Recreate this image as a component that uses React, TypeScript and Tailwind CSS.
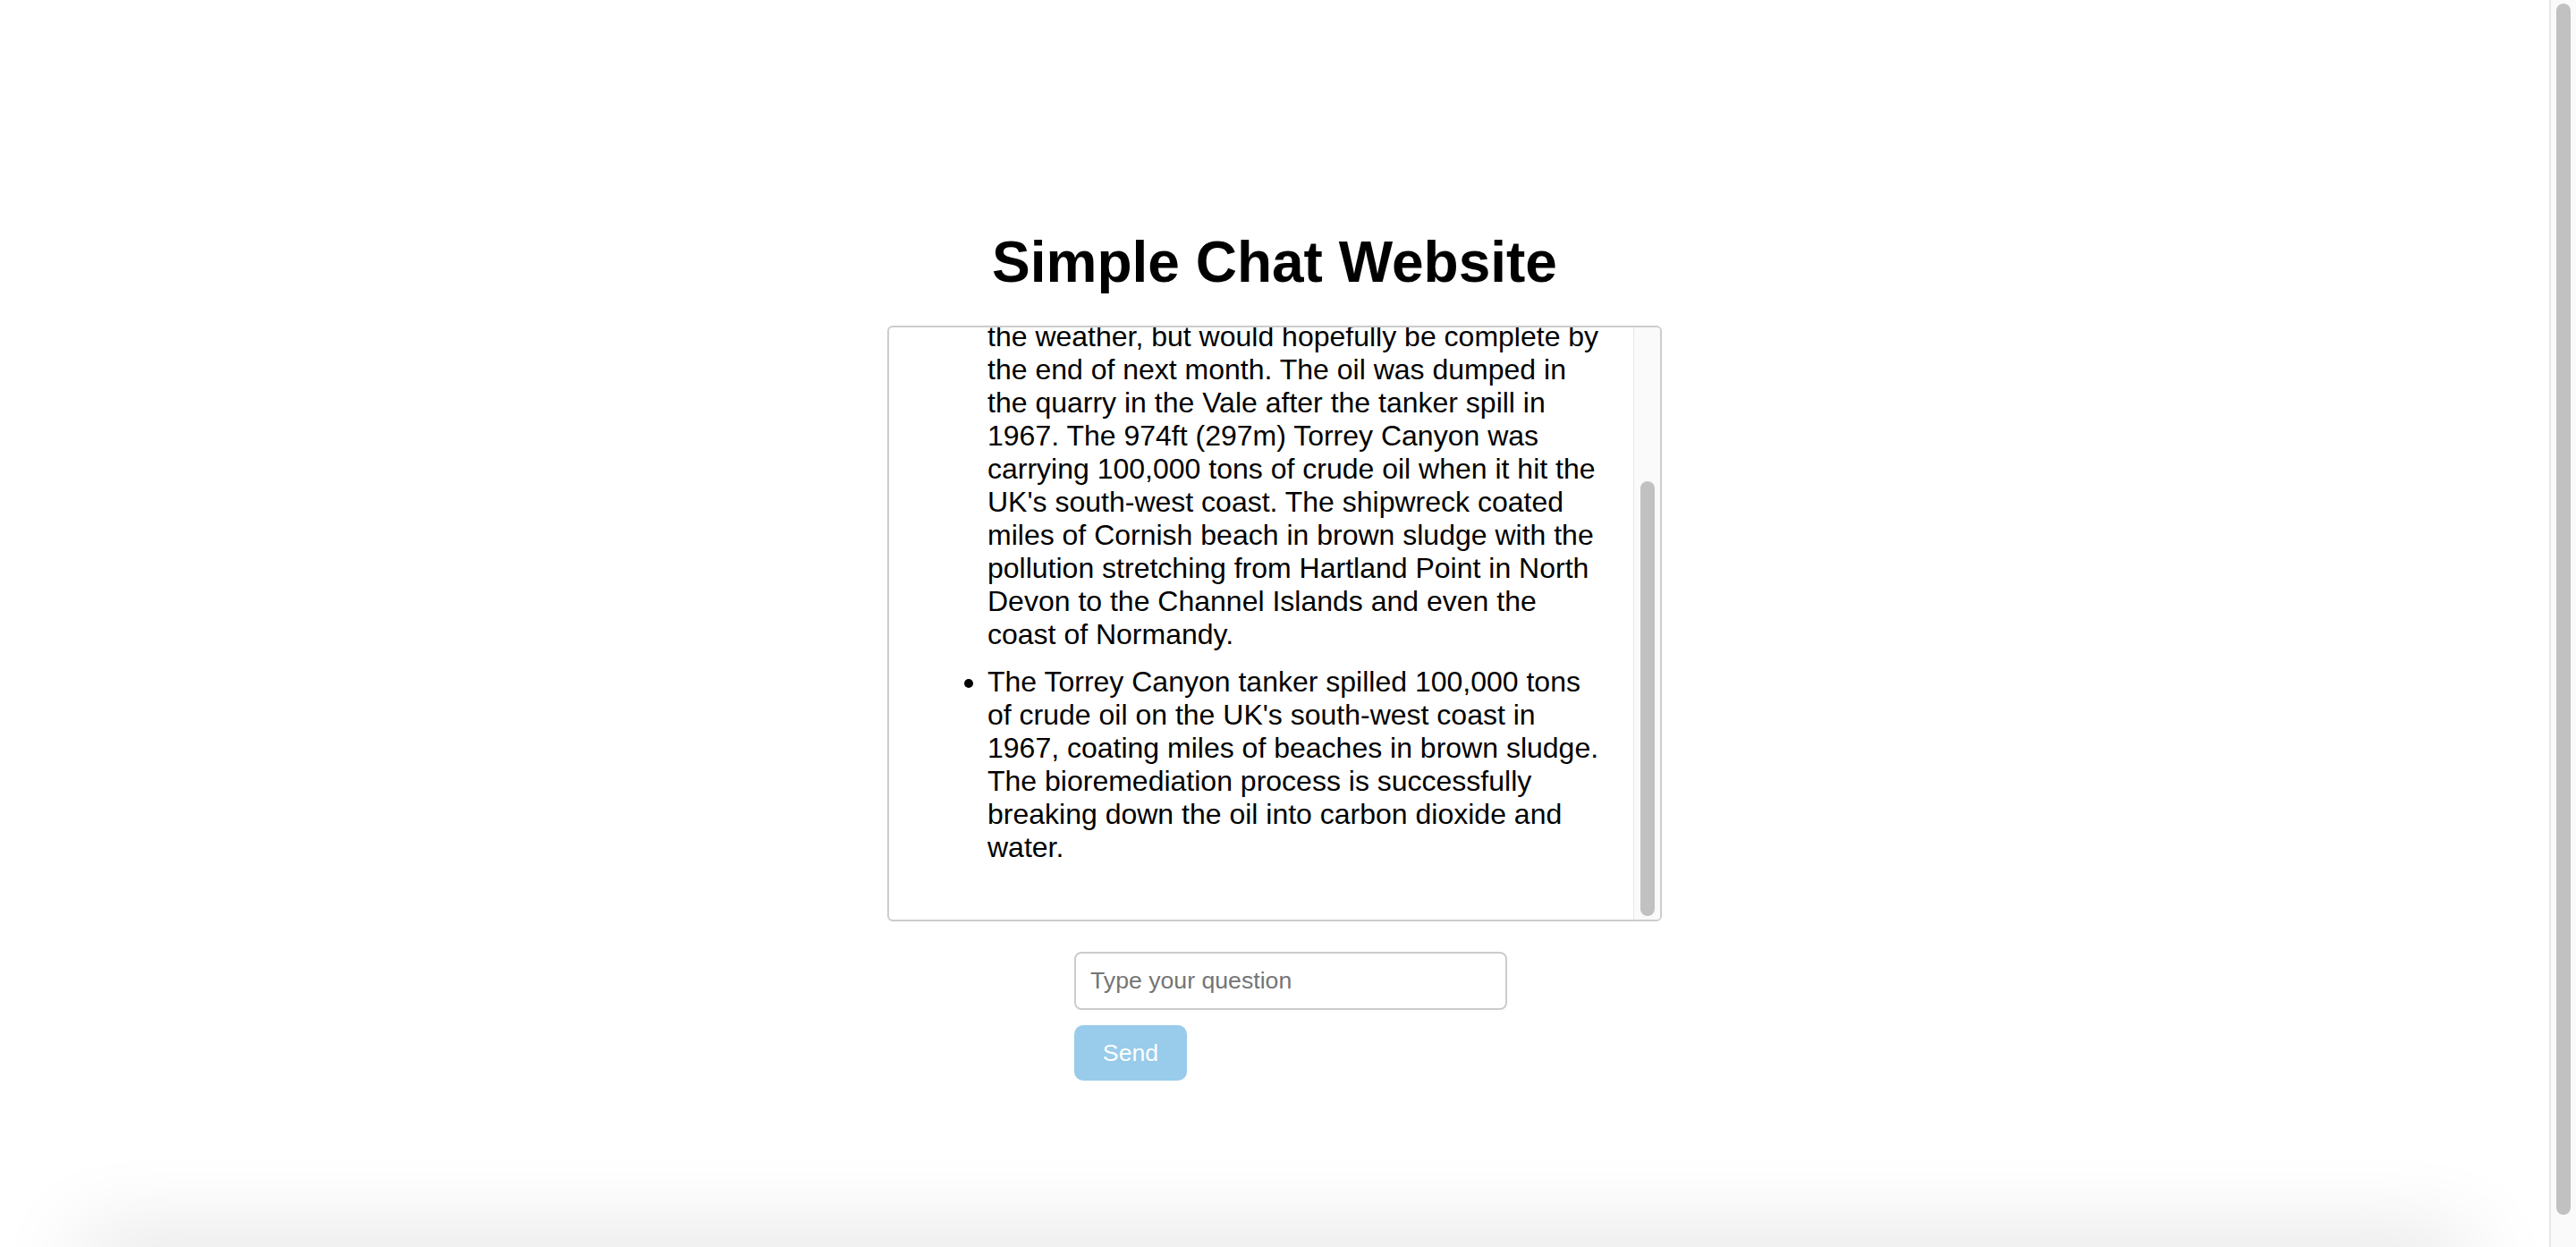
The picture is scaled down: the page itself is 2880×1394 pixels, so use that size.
const messages = [
  {
    id: 1,
    lead: "Jersey's environment department said the final stage of the clean-up had been slowed by",
    text: "the weather, but would hopefully be complete by the end of next month. The oil was dumped in the quarry in the Vale after the tanker spill in 1967. The 974ft (297m) Torrey Canyon was carrying 100,000 tons of crude oil when it hit the UK's south-west coast. The shipwreck coated miles of Cornish beach in brown sludge with the pollution stretching from Hartland Point in North Devon to the Channel Islands and even the coast of Normandy.",
  },
  {
    id: 2,
    lead: '',
    text: "The Torrey Canyon tanker spilled 100,000 tons of crude oil on the UK's south-west coast in 1967, coating miles of beaches in brown sludge. The bioremediation process is successfully breaking down the oil into carbon dioxide and water.",
  },
];

export default function App() {
  return (
    <div className="flex h-[1394px] w-full overflow-hidden bg-white font-['Liberation_Sans',Arial,sans-serif] text-black">
      <main className="relative flex flex-1 flex-col items-center overflow-hidden pt-[256px]">
        <h1 className="text-[64px] font-bold leading-[74px]">Simple Chat Website</h1>

        {/* chat log, scrolled to the bottom */}
        <div className="mt-[34px] flex h-[666px] w-[866px] overflow-hidden rounded-[6px] border-2 border-[#cccccc]">
          <div className="flex flex-1 flex-col justify-end overflow-hidden p-[30px]">
            <ul className="mb-[32px] list-disc pl-[80px] text-[32px] leading-[37px]">
              {messages.map((m, i) => (
                <li key={m.id} className={i < messages.length - 1 ? 'mb-[16px]' : ''}>
                  {m.lead && (
                    <>
                      {m.lead}
                      <br />
                    </>
                  )}
                  {m.text}
                </li>
              ))}
            </ul>
          </div>
          <div className="flex w-[30px] shrink-0 flex-col items-center justify-end border-l border-[#e8e8e8] bg-[#fafafa] pb-[4px]">
            <div className="h-[486px] w-[16px] rounded-full bg-[#c1c1c1]" />
          </div>
        </div>

        <div className="mt-[34px] flex w-[866px] flex-col items-start gap-[17px] pl-[209px]">
          <input
            type="text"
            placeholder="Type your question"
            className="h-[65px] w-[484px] rounded-[8px] border-2 border-[#cccccc] bg-white px-[16px] text-[26.67px] text-black outline-none placeholder:text-[#757575]"
          />
          <button className="h-[62px] w-[126px] rounded-[10px] bg-[#99cbea] text-[26.67px] text-white">
            Send
          </button>
        </div>

        <div className="pointer-events-none absolute bottom-[-40px] left-[90px] right-[90px] h-[40px] shadow-[0_0_100px_rgba(0,0,0,0.2)]" />
      </main>

      <div className="flex w-[30px] shrink-0 justify-center border-l-2 border-[#e8e8e8] bg-[#fafafa] pt-[4px]">
        <div className="h-[1354px] w-[16px] rounded-full bg-[#c1c1c1]" />
      </div>
    </div>
  );
}
